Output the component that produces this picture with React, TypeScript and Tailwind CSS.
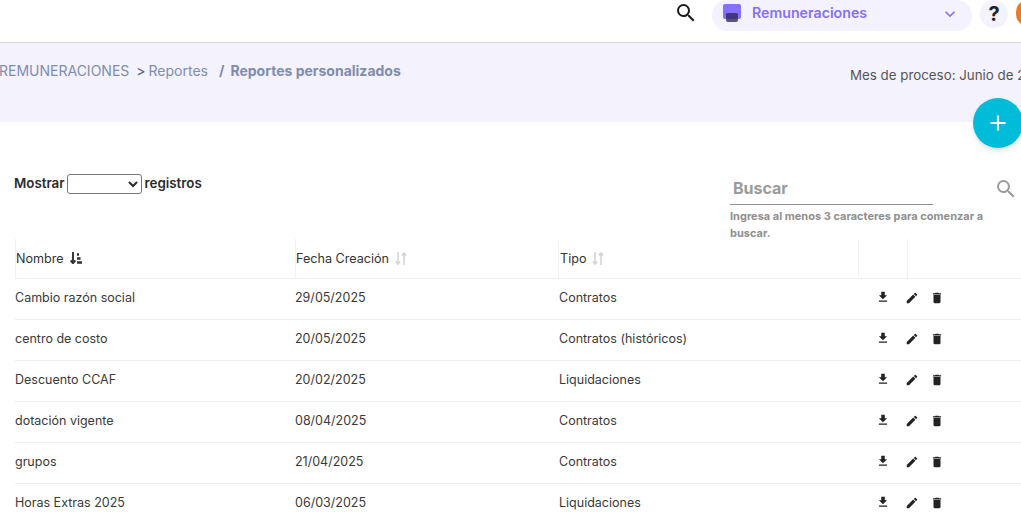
import React from "react";
import { MdFileDownload, MdEdit, MdDelete, MdKeyboardArrowDown, MdAdd, MdOutlineSearch, MdSearch } from "react-icons/md";

const rows = [
  ["Cambio razón social", "29/05/2025", "Contratos"],
  ["centro de costo", "20/05/2025", "Contratos (históricos)"],
  ["Descuento CCAF", "20/02/2025", "Liquidaciones"],
  ["dotación vigente", "08/04/2025", "Contratos"],
  ["grupos", "21/04/2025", "Contratos"],
  ["Horas Extras 2025", "06/03/2025", "Liquidaciones"],
];

function SortIdle() {
  return (
    <svg width="12" height="13" viewBox="0 0 12 13" fill="none" stroke="#d4d4d4" strokeWidth="1.6" className="-mt-[3px] -ml-[1px]">
      <path d="M3 0v12M0.8 9.5L3 12l2.2-2.5" />
      <path d="M9 13V1M6.8 3.5L9 1l2.2 2.5" />
    </svg>
  );
}

function SortActive() {
  return (
    <svg width="12" height="12" viewBox="0 0 12 12" fill="none" stroke="#333" className="-mt-[3px] -ml-[1px]">
      <path d="M3 0v11M0.6 8.4L3 11.2l2.4-2.8" strokeWidth="1.9" />
      <path d="M7 2.5h2M7 6.5h3.5M7 10.5h5" strokeWidth="2.4" />
    </svg>
  );
}

export default function App() {
  return (
    <div
      className="relative w-[1021px] h-[512px] overflow-hidden bg-white text-[#333]"
      style={{ fontFamily: "Inter, 'Noto Sans', sans-serif" }}
    >
      <header className="h-[43px] border-b border-[#d9d6e0] bg-white flex items-start justify-end">
        <MdSearch className="mt-[1px] mr-[14px] text-[24px] text-[#1b1b1f]" />
        <div className="w-[260px] h-[31px] rounded-[16px] bg-[#f4f2fe] flex items-center pl-[11px] pr-[12px] mr-[8px]">
          <svg width="18" height="18" viewBox="0 0 18 18" className="mr-[11px] -mt-[6px]">
            <rect x="0" y="0" width="18" height="15" rx="2" fill="#8470fb" />
            <rect x="3" y="9" width="12" height="9" rx="2" fill="#5c5378" />
            <rect x="3" y="9" width="12" height="6" rx="2" fill="#43367f" />
          </svg>
          <span className="text-[14.2px] font-semibold text-[#8470fb] flex-1 -mt-[5px]">Remuneraciones</span>
          <MdKeyboardArrowDown className="text-[20px] text-[#8470fb] -mt-[3px]" />
        </div>
        <div className="w-[28px] h-[28px] rounded-full bg-[#f4f2fe] flex items-center justify-center mr-[8px] shrink-0 text-[20px] font-bold text-[#222]">
          ?
        </div>
        <div className="w-[24px] h-[26px] rounded-l-[12px] bg-[#e07f33] shrink-0 mr-[-19px]" />
      </header>

      <div className="h-[79px] bg-[#f4f2fd] flex items-start justify-between">
        <div className="flex items-center text-[14px] text-[#7e8db0] pt-[19px] -ml-[1px] leading-[17px]">
          <span>REMUNERACIONES</span>
          <span className="ml-[7px] text-[#56627c]">&gt;</span>
          <span className="ml-[3px]">Reportes</span>
          <span className="ml-[11px] font-bold">/</span>
          <span className="ml-[6px] font-bold">Reportes personalizados</span>
        </div>
        <div className="pt-[24px] text-[13.33px] leading-[17px] text-[#555] whitespace-nowrap -mr-[29px]">
          Mes de proceso: Junio de 2025
        </div>
      </div>

      <main className="bg-white rounded-tl-[8px] pt-[52px]">
        <div className="flex items-start justify-between pl-[14px] h-[74px]">
          <div className="flex items-center text-[13.33px] font-semibold text-[#2b2b2b] gap-[3px]">
            <span>Mostrar</span>
            <select className="w-[75px] h-[20px] -ml-[1px] border border-[#767676] rounded-[3px] bg-white text-[13px]" />
            <span>registros</span>
          </div>
          <div className="w-[291px] mt-[2px]">
            <div className="flex items-start">
              <div className="w-[203px] h-[29px] border-b border-[#8f8f8f] pl-[3px] text-[16px] font-bold text-[#9b9b9b] leading-[24px]">
                Buscar
              </div>
              <MdOutlineSearch className="ml-[61px] mt-[1px] text-[24px] text-[#9b9b9b]" />
            </div>
            <p className="mt-[3px] w-[270px] text-[11px] font-bold leading-[17px] text-[#8f8f8f]">
              Ingresa al menos 3 caracteres para comenzar a buscar.
            </p>
          </div>
        </div>

        <div className="ml-[15px] w-[1006px]">
          <div className="grid grid-cols-[280px_263px_300px_49px_1fr] h-[40px] border-b border-[#eeeeee] text-[12.6px] text-[#333] mt-[-9px]">
            <div className="border-l border-[#f1f1f1] flex items-center gap-[7px] pt-[2px]">
              <span>Nombre</span>
              <SortActive />
            </div>
            <div className="border-l border-[#f1f1f1] flex items-center gap-[7px] pt-[2px]">
              <span>Fecha Creación</span>
              <SortIdle />
            </div>
            <div className="border-l border-[#f1f1f1] flex items-center gap-[7px] pt-[2px] pl-px">
              <span>Tipo</span>
              <SortIdle />
            </div>
            <div className="border-l border-[#f1f1f1]" />
            <div className="border-l border-[#f1f1f1]" />
          </div>
          {rows.map((r) => (
            <div
              key={r[0]}
              className="grid grid-cols-[280px_263px_300px_1fr] h-[41px] pb-[2px] items-center border-b border-[#eeeeee] text-[12.5px] text-[#3a3a3a]"
            >
              <div>{r[0]}</div>
              <div>{r[1]}</div>
              <div className="pl-px">{r[2]}</div>
              <div className="flex items-center pl-[18px] text-[#222] text-[14px]">
                <MdFileDownload className="-mt-[2px]" />
                <MdEdit className="ml-[15px]" />
                <MdDelete className="ml-[11px]" />
              </div>
            </div>
          ))}
        </div>
      </main>

      <button className="absolute left-[973px] top-[98px] w-[50px] h-[50px] rounded-full bg-[#00bcd9] shadow-md flex items-center justify-center text-white">
        <MdAdd className="text-[26px]" />
      </button>
    </div>
  );
}
